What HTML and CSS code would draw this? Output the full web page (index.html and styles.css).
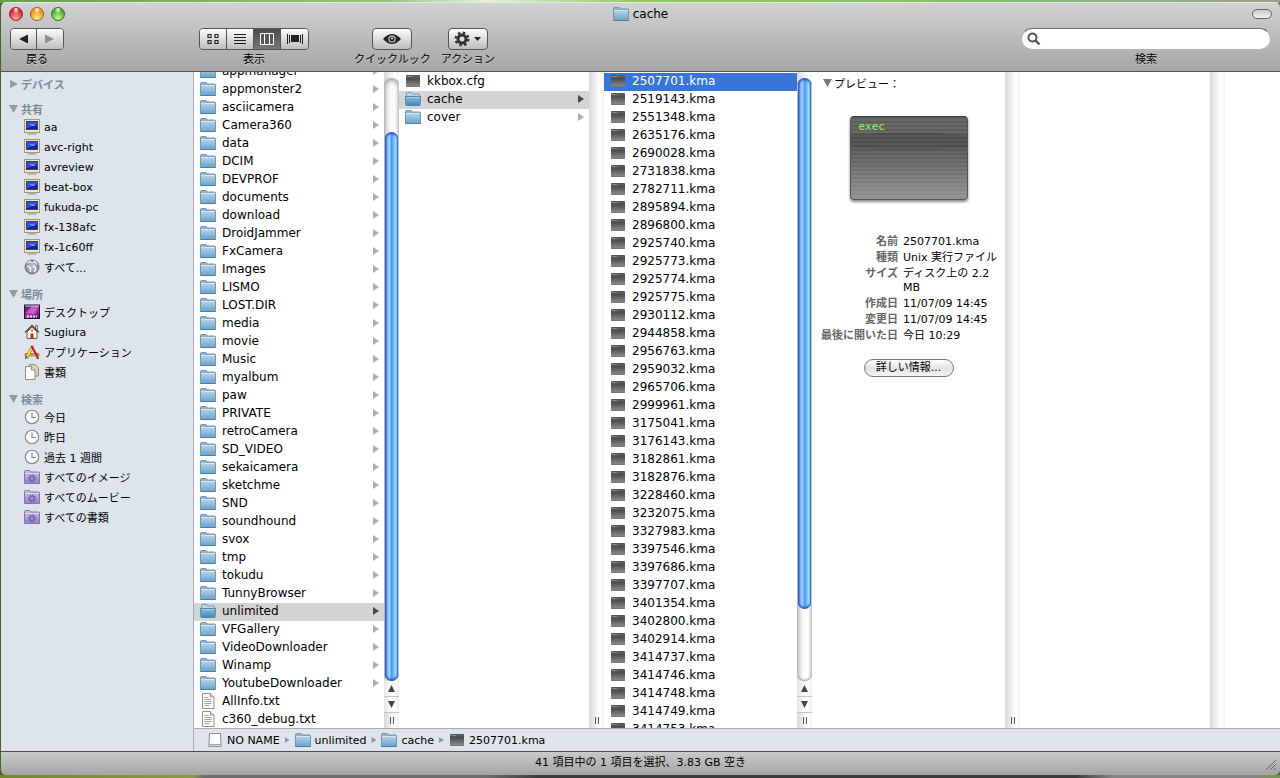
FILE: index.html
```html
<!DOCTYPE html>
<html lang="ja">
<head>
<meta charset="utf-8">
<title>cache</title>
<link rel="stylesheet" href="styles.css">
</head>
<body>
<svg class="defs" aria-hidden="true">
  <defs>
    <linearGradient id="g-folder" x1="0" y1="0" x2="0" y2="1"><stop offset="0" stop-color="#b4d2e8"/><stop offset="1" stop-color="#6fa4c8"/></linearGradient>
    <linearGradient id="g-open" x1="0" y1="0" x2="0" y2="1"><stop offset="0" stop-color="#8fc0dc"/><stop offset="1" stop-color="#4585b0"/></linearGradient>
    <linearGradient id="g-exec" x1="0" y1="0" x2="0" y2="1"><stop offset="0" stop-color="#6a6a6a"/><stop offset=".3" stop-color="#4c4c4c"/><stop offset="1" stop-color="#8f8f8f"/></linearGradient>
    <linearGradient id="g-smart" x1="0" y1="0" x2="0" y2="1"><stop offset="0" stop-color="#c9bfe6"/><stop offset="1" stop-color="#9484c6"/></linearGradient>
    <linearGradient id="g-desk" x1="0" y1="0" x2="1" y2="1"><stop offset="0" stop-color="#2a1050"/><stop offset=".5" stop-color="#b63bb0"/><stop offset="1" stop-color="#3a1668"/></linearGradient>
    <radialGradient id="g-globe"><stop offset="0" stop-color="#f2f2f8"/><stop offset=".6" stop-color="#a4a6bc"/><stop offset="1" stop-color="#77788e"/></radialGradient>
    <symbol id="folder" viewBox="0 0 16 16">
      <path d="M.5 14.500v-12q0-1 1-1h4.300q.7 0 .9.700l.3.800h7.500q1 0 1 1v10.500z" fill="#8db4d0" stroke="#6f97b5"/>
      <path d="M1 4.500h14v9.500H1z" fill="url(#g-folder)"/><path d="M1 4.500h14" stroke="#d3e6f3"/><path d="M.5 14.500h15" stroke="#4d7da3"/>
    </symbol>
    <symbol id="folder-open" viewBox="0 0 16 16">
      <path d="M1.500 13v-10.500q0-1 1-1h4l1 1.500h6q1 0 1 1v9z" fill="#b4d4e8" stroke="#6c9dbe"/>
      <path d="M.5 5.500h15l-.5 9H1z" fill="url(#g-open)" stroke="#4d88b0"/><path d="M1.500 6.500h13" stroke="#a9d2e8"/>
    </symbol>
    <symbol id="exec" viewBox="0 0 16 16">
      <rect x="1" y="2" width="14" height="12" rx="1" fill="url(#g-exec)"/><path d="M1.500 2.500h13" stroke="#555"/><path d="M2 3.500h5" stroke="#6f9c6f"/><path d="M1.500 13.500h13" stroke="#777"/>
    </symbol>
    <symbol id="doc" viewBox="0 0 16 16">
      <path d="M2.500.5h8l3.500 3.500v11.500H2.500z" fill="#fbfbfb" stroke="#929292"/><path d="M10.500.5v3.500H14" fill="#ddd" stroke="#929292"/>
      <path d="M4.500 4.500h4M4.500 6.500h7M4.500 8.500h7M4.500 10.500h7M4.500 12.500h5" stroke="#a2a2a2"/>
    </symbol>
    <symbol id="pc" viewBox="0 0 16 16">
      <rect x=".5" y=".5" width="15" height="13" fill="#efe7bd" stroke="#a09a7c"/><rect x="2.500" y="2.500" width="11" height="8" fill="#141fae" stroke="#3a3d5e"/>
      <path d="M3 3h10v2.500q-4 .5-10 4z" fill="#3450e4"/><path d="M6 5.500h4M7 6.500h4" stroke="#6f88f4"/><path d="M5.500 13.500h5v1h-5z" fill="#b8b18f"/><path d="M3.500 15h9" stroke="#99947a"/>
    </symbol>
    <symbol id="globe" viewBox="0 0 16 16">
      <circle cx="8" cy="8" r="7" fill="url(#g-globe)" stroke="#7b7d92"/><path d="M3 4l3-1.500 2 1.500 3-1.500 2 3M3 7l3 1 1 3-1 2M8 7l3 1 1 3-2 2" fill="none" stroke="#fff" stroke-width="1.200"/><path d="M8 2v12M5 6l5 4" stroke="#7a7c92" stroke-width=".6"/>
    </symbol>
    <symbol id="desktop" viewBox="0 0 16 16">
      <rect x=".5" y="1" width="15" height="13.500" fill="url(#g-desk)" stroke="#1d1030"/><path d="M2 9l6-7h6l-3 8z" fill="#e36ad6" opacity=".7"/><path d="M1 2h14" stroke="#d8c5ea"/><path d="M3 12.500h10" stroke="#dfe6ff" stroke-width="2" stroke-dasharray="2 1"/>
    </symbol>
    <symbol id="home" viewBox="0 0 16 16">
      <path d="M3 8v6.500h10V8L8 3z" fill="#fff8e8" stroke="#6f5a42"/><path d="M11.500 1.500h2v5h-2z" fill="#d8c6aa" stroke="#6f5a42" stroke-width=".7"/><path d="M1 8.500L8 1.500l7 7" fill="none" stroke="#5f4630" stroke-width="1.300"/><path d="M6.500 9.500h3v5h-3z" fill="#b5302a"/><circle cx="8" cy="6.500" r="1" fill="#c33"/>
    </symbol>
    <symbol id="apps" viewBox="0 0 16 16">
      <path d="M1 9.500h14v2.500H1z" fill="#d9a254" stroke="#8f6427" stroke-width=".6"/><path d="M9 2l-6.500 12" stroke="#7d6613" stroke-width="3"/><path d="M9 2L3 13" stroke="#ffe13c" stroke-width="2"/><path d="M7.500 2l5.500 10 1 3" stroke="#c3202b" stroke-width="2.200" fill="none"/><path d="M1.500 15l1-3" stroke="#444"/>
    </symbol>
    <symbol id="papers" viewBox="0 0 16 16">
      <path d="M5.500.5h5.500l3.500 3.500v8H5.500z" fill="#d9d6ae" stroke="#918f6d"/><path d="M1.500 2.500h6l3.500 3.500v9.500H1.500z" fill="#fdfdf8" stroke="#8b8b82"/><path d="M7.500 2.500V6H11" fill="#ddd" stroke="#8b8b82"/>
    </symbol>
    <symbol id="clock" viewBox="0 0 16 16">
      <circle cx="8" cy="8" r="6.700" fill="#fafafa" stroke="#85878a" stroke-width="1.100"/><path d="M8 3.500V8.500h4" fill="none" stroke="#85878a" stroke-width="1.200"/>
    </symbol>
    <symbol id="smart" viewBox="0 0 16 16">
      <path d="M.5 14.500v-12q0-1 1-1h4l1 1.500h8q1 0 1 1v10.500z" fill="url(#g-smart)" stroke="#8474b0"/><path d="M1 4.500h14" stroke="#e1dbf3"/><circle cx="8" cy="9.500" r="2.200" fill="none" stroke="#7767b0" stroke-width="1.500"/><circle cx="8" cy="9.500" r="3.500" fill="none" stroke="#7767b0" stroke-width="1.400" stroke-dasharray="1.370"/>
    </symbol>
    <symbol id="drive" viewBox="0 0 16 16">
      <path d="M2.500 1.500h11l.5 11v2H2v-2z" fill="#fff" stroke="#8d8d8d"/><path d="M2 12.500h12M2 14h12" stroke="#a7a7a7"/>
    </symbol>
  </defs>
</svg>

<div class="window">
  <header class="toolbar">
    <div class="titlebar">
      <div class="lights">
        <button class="light red" aria-label="閉じる"></button>
        <button class="light amber" aria-label="しまう"></button>
        <button class="light green" aria-label="拡大"></button>
      </div>
      <h1 class="title"><svg class="ico"><use href="#folder"/></svg>cache</h1>
      <button class="pill" aria-label="ツールバー"></button>
    </div>
    <div class="tools">
      <div class="tool tool-nav">
        <div class="seg">
          <button class="seg-btn nav-btn" aria-label="前へ"><svg width="10" height="10"><path d="M0 5l9-4.500v9z" fill="#222"/></svg></button>
          <button class="seg-btn nav-btn" aria-label="次へ"><svg width="10" height="10"><path d="M9 5L0 .5v9z" fill="#8f8f8f"/></svg></button>
        </div>
        <span class="tool-label">戻る</span>
      </div>
      <div class="tool tool-view">
        <div class="seg">
          <button class="seg-btn" aria-label="アイコン"><svg width="12" height="12" fill="none" stroke="#222" stroke-width="1.200"><path d="M1 1.500h3v3H1zM8 1.500h3v3H8zM1 7.500h3v3H1zM8 7.500h3v3H8z"/></svg></button>
          <button class="seg-btn" aria-label="リスト"><svg width="12" height="12" stroke="#222"><path d="M0 1.500h12M0 4.500h12M0 7.500h12M0 10.500h12"/></svg></button>
          <button class="seg-btn active" aria-label="カラム"><svg width="14" height="12" fill="#555" stroke="#fff"><path d="M.5.500h13v11H.5zM4.500.5v11M9.500.5v11"/></svg></button>
          <button class="seg-btn" aria-label="Cover Flow"><svg width="16" height="12"><path d="M.5 1v10M2.500 2v8M13.500 2v8M15.500 1v10" stroke="#222"/><path d="M4 2h8v7H4z" fill="#222"/></svg></button>
        </div>
        <span class="tool-label">表示</span>
      </div>
      <div class="tool tool-look">
        <button class="tool-btn" aria-label="クイックルック"><svg width="18" height="12"><path d="M0 6Q9-4 18 6 9 16 0 6z" fill="#222"/><circle cx="9" cy="6" r="3.600" fill="#eee"/><circle cx="9" cy="6" r="2.600" fill="#222"/><circle cx="9" cy="5.500" r="1" fill="#eee"/></svg></button>
        <span class="tool-label">クイックルック</span>
      </div>
      <div class="tool tool-action">
        <button class="tool-btn" aria-label="アクション"><svg width="28" height="16"><circle cx="8" cy="8" r="4" fill="none" stroke="#333" stroke-width="3"/><circle cx="8" cy="8" r="6.300" fill="none" stroke="#333" stroke-width="2.400" stroke-dasharray="2.474"/><path d="M20 6h7l-3.500 4z" fill="#222"/></svg></button>
        <span class="tool-label">アクション</span>
      </div>
      <div class="tool tool-search">
        <div class="search"><svg width="14" height="14"><circle cx="5.500" cy="5.500" r="4" fill="none" stroke="#555" stroke-width="2"/><path d="M8.500 8.500l4 4" stroke="#555" stroke-width="2.400"/></svg><input class="search-input" id="search" type="text"></div>
        <label class="tool-label" for="search">検索</label>
      </div>
    </div>
  </header>

  <main class="body">
    <nav class="sidebar">
      <h2 class="group closed">デバイス</h2>
      <h2 class="group">共有</h2>
      <ul class="places">
        <li><svg class="ico"><use href="#pc"/></svg>aa</li>
        <li><svg class="ico"><use href="#pc"/></svg>avc-right</li>
        <li><svg class="ico"><use href="#pc"/></svg>avreview</li>
        <li><svg class="ico"><use href="#pc"/></svg>beat-box</li>
        <li><svg class="ico"><use href="#pc"/></svg>fukuda-pc</li>
        <li><svg class="ico"><use href="#pc"/></svg>fx-138afc</li>
        <li><svg class="ico"><use href="#pc"/></svg>fx-1c60ff</li>
        <li><svg class="ico"><use href="#globe"/></svg>すべて...</li>
      </ul>
      <h2 class="group">場所</h2>
      <ul class="places">
        <li><svg class="ico"><use href="#desktop"/></svg>デスクトップ</li>
        <li><svg class="ico"><use href="#home"/></svg>Sugiura</li>
        <li><svg class="ico"><use href="#apps"/></svg>アプリケーション</li>
        <li><svg class="ico"><use href="#papers"/></svg>書類</li>
      </ul>
      <h2 class="group">検索</h2>
      <ul class="places">
        <li><svg class="ico"><use href="#clock"/></svg>今日</li>
        <li><svg class="ico"><use href="#clock"/></svg>昨日</li>
        <li><svg class="ico"><use href="#clock"/></svg>過去 1 週間</li>
        <li><svg class="ico"><use href="#smart"/></svg>すべてのイメージ</li>
        <li><svg class="ico"><use href="#smart"/></svg>すべてのムービー</li>
        <li><svg class="ico"><use href="#smart"/></svg>すべての書類</li>
      </ul>
    </nav>

    <div class="browser">
      <div class="columns">
        <section class="col">
          <ul class="files scrolled">
            <li class="dir"><svg class="ico"><use href="#folder"/></svg>appmanager</li>
            <li class="dir"><svg class="ico"><use href="#folder"/></svg>appmonster2</li>
            <li class="dir"><svg class="ico"><use href="#folder"/></svg>asciicamera</li>
            <li class="dir"><svg class="ico"><use href="#folder"/></svg>Camera360</li>
            <li class="dir"><svg class="ico"><use href="#folder"/></svg>data</li>
            <li class="dir"><svg class="ico"><use href="#folder"/></svg>DCIM</li>
            <li class="dir"><svg class="ico"><use href="#folder"/></svg>DEVPROF</li>
            <li class="dir"><svg class="ico"><use href="#folder"/></svg>documents</li>
            <li class="dir"><svg class="ico"><use href="#folder"/></svg>download</li>
            <li class="dir"><svg class="ico"><use href="#folder"/></svg>DroidJammer</li>
            <li class="dir"><svg class="ico"><use href="#folder"/></svg>FxCamera</li>
            <li class="dir"><svg class="ico"><use href="#folder"/></svg>Images</li>
            <li class="dir"><svg class="ico"><use href="#folder"/></svg>LISMO</li>
            <li class="dir"><svg class="ico"><use href="#folder"/></svg>LOST.DIR</li>
            <li class="dir"><svg class="ico"><use href="#folder"/></svg>media</li>
            <li class="dir"><svg class="ico"><use href="#folder"/></svg>movie</li>
            <li class="dir"><svg class="ico"><use href="#folder"/></svg>Music</li>
            <li class="dir"><svg class="ico"><use href="#folder"/></svg>myalbum</li>
            <li class="dir"><svg class="ico"><use href="#folder"/></svg>paw</li>
            <li class="dir"><svg class="ico"><use href="#folder"/></svg>PRIVATE</li>
            <li class="dir"><svg class="ico"><use href="#folder"/></svg>retroCamera</li>
            <li class="dir"><svg class="ico"><use href="#folder"/></svg>SD_VIDEO</li>
            <li class="dir"><svg class="ico"><use href="#folder"/></svg>sekaicamera</li>
            <li class="dir"><svg class="ico"><use href="#folder"/></svg>sketchme</li>
            <li class="dir"><svg class="ico"><use href="#folder"/></svg>SND</li>
            <li class="dir"><svg class="ico"><use href="#folder"/></svg>soundhound</li>
            <li class="dir"><svg class="ico"><use href="#folder"/></svg>svox</li>
            <li class="dir"><svg class="ico"><use href="#folder"/></svg>tmp</li>
            <li class="dir"><svg class="ico"><use href="#folder"/></svg>tokudu</li>
            <li class="dir"><svg class="ico"><use href="#folder"/></svg>TunnyBrowser</li>
            <li class="dir open"><svg class="ico"><use href="#folder-open"/></svg>unlimited</li>
            <li class="dir"><svg class="ico"><use href="#folder"/></svg>VFGallery</li>
            <li class="dir"><svg class="ico"><use href="#folder"/></svg>VideoDownloader</li>
            <li class="dir"><svg class="ico"><use href="#folder"/></svg>Winamp</li>
            <li class="dir"><svg class="ico"><use href="#folder"/></svg>YoutubeDownloader</li>
            <li><svg class="ico"><use href="#doc"/></svg>AllInfo.txt</li>
            <li><svg class="ico"><use href="#doc"/></svg>c360_debug.txt</li>
          </ul>
        </section>
        <div class="scroll">
          <div class="track at-end"><div class="thumb thumb-long"></div></div>
          <button class="arrow up" aria-label="上へ"></button><button class="arrow down" aria-label="下へ"></button>
          <span class="grip"></span>
        </div>
        <section class="col">
          <ul class="files">
            <li><svg class="ico"><use href="#exec"/></svg>kkbox.cfg</li>
            <li class="dir open"><svg class="ico"><use href="#folder-open"/></svg>cache</li>
            <li class="dir"><svg class="ico"><use href="#folder"/></svg>cover</li>
          </ul>
        </section>
        <div class="scroll"><span class="grip"></span></div>
        <section class="col wide">
          <ul class="files">
            <li class="selected"><svg class="ico"><use href="#exec"/></svg>2507701.kma</li>
            <li><svg class="ico"><use href="#exec"/></svg>2519143.kma</li>
            <li><svg class="ico"><use href="#exec"/></svg>2551348.kma</li>
            <li><svg class="ico"><use href="#exec"/></svg>2635176.kma</li>
            <li><svg class="ico"><use href="#exec"/></svg>2690028.kma</li>
            <li><svg class="ico"><use href="#exec"/></svg>2731838.kma</li>
            <li><svg class="ico"><use href="#exec"/></svg>2782711.kma</li>
            <li><svg class="ico"><use href="#exec"/></svg>2895894.kma</li>
            <li><svg class="ico"><use href="#exec"/></svg>2896800.kma</li>
            <li><svg class="ico"><use href="#exec"/></svg>2925740.kma</li>
            <li><svg class="ico"><use href="#exec"/></svg>2925773.kma</li>
            <li><svg class="ico"><use href="#exec"/></svg>2925774.kma</li>
            <li><svg class="ico"><use href="#exec"/></svg>2925775.kma</li>
            <li><svg class="ico"><use href="#exec"/></svg>2930112.kma</li>
            <li><svg class="ico"><use href="#exec"/></svg>2944858.kma</li>
            <li><svg class="ico"><use href="#exec"/></svg>2956763.kma</li>
            <li><svg class="ico"><use href="#exec"/></svg>2959032.kma</li>
            <li><svg class="ico"><use href="#exec"/></svg>2965706.kma</li>
            <li><svg class="ico"><use href="#exec"/></svg>2999961.kma</li>
            <li><svg class="ico"><use href="#exec"/></svg>3175041.kma</li>
            <li><svg class="ico"><use href="#exec"/></svg>3176143.kma</li>
            <li><svg class="ico"><use href="#exec"/></svg>3182861.kma</li>
            <li><svg class="ico"><use href="#exec"/></svg>3182876.kma</li>
            <li><svg class="ico"><use href="#exec"/></svg>3228460.kma</li>
            <li><svg class="ico"><use href="#exec"/></svg>3232075.kma</li>
            <li><svg class="ico"><use href="#exec"/></svg>3327983.kma</li>
            <li><svg class="ico"><use href="#exec"/></svg>3397546.kma</li>
            <li><svg class="ico"><use href="#exec"/></svg>3397686.kma</li>
            <li><svg class="ico"><use href="#exec"/></svg>3397707.kma</li>
            <li><svg class="ico"><use href="#exec"/></svg>3401354.kma</li>
            <li><svg class="ico"><use href="#exec"/></svg>3402800.kma</li>
            <li><svg class="ico"><use href="#exec"/></svg>3402914.kma</li>
            <li><svg class="ico"><use href="#exec"/></svg>3414737.kma</li>
            <li><svg class="ico"><use href="#exec"/></svg>3414746.kma</li>
            <li><svg class="ico"><use href="#exec"/></svg>3414748.kma</li>
            <li><svg class="ico"><use href="#exec"/></svg>3414749.kma</li>
            <li><svg class="ico"><use href="#exec"/></svg>3414753.kma</li>
          </ul>
        </section>
        <div class="scroll">
          <div class="track"><div class="thumb"></div></div>
          <button class="arrow up" aria-label="上へ"></button><button class="arrow down" aria-label="下へ"></button>
          <span class="grip"></span>
        </div>
        <section class="col wide preview">
          <h2 class="preview-title">プレビュー：</h2>
          <div class="exec-art"><span class="exec-text">exec</span></div>
          <dl class="info">
            <dt>名前</dt><dd>2507701.kma</dd>
            <dt>種類</dt><dd>Unix 実行ファイル</dd>
            <dt>サイズ</dt><dd>ディスク上の 2.2 MB</dd>
            <dt>作成日</dt><dd>11/07/09 14:45</dd>
            <dt>変更日</dt><dd>11/07/09 14:45</dd>
            <dt>最後に開いた日</dt><dd>今日 10:29</dd>
          </dl>
          <button class="more">詳しい情報...</button>
        </section>
        <div class="scroll"><span class="grip"></span></div>
        <section class="col"></section>
        <div class="scroll"></div>
      </div>
      <div class="path">
        <span class="crumb"><svg class="ico"><use href="#drive"/></svg>NO NAME</span>
        <span class="crumb"><svg class="ico"><use href="#folder"/></svg>unlimited</span>
        <span class="crumb"><svg class="ico"><use href="#folder"/></svg>cache</span>
        <span class="crumb"><svg class="ico"><use href="#exec"/></svg>2507701.kma</span>
      </div>
    </div>
  </main>
  <footer class="status">41 項目中の 1 項目を選択、3.83 GB 空き
    <svg class="resize" width="12" height="12" stroke="#666"><path d="M1 11L11 1M5 11l6-6M9 11l2-2"/></svg>
  </footer>
</div>
</body>
</html>
```

FILE: styles.css
```css
* { box-sizing: border-box; }
html { height: 100%; }
body {
  margin: 0;
  height: 100%;
  padding: 2px 0 3px 1px;
  overflow: hidden;
  background:
    linear-gradient(90deg, #66a04a, #8cc878 30%, #e4f0d8 38%, #8fc95a 50%, #7cc070 80%, #a09c90) top / 100% 3px no-repeat,
    linear-gradient(90deg, #6f8a28, #8a9a40 15%, #6d6d6d 16%, #6d6d6d 38%, #3c3c3c 42%, #3c3c3c 84%, #858585 87%, #858585 98%, #6f9a4a) bottom / 100% 3px no-repeat,
    #4a6128;
  font-family: "DejaVu Sans", "Noto Sans CJK JP", sans-serif;
  font-size: 12px;
  color: #000;
}
h1, h2, ul, dl, dd { margin: 0; padding: 0; font-weight: normal; list-style: none; }
button { padding: 0; font: inherit; color: inherit; }
.defs { position: absolute; width: 0; height: 0; }
.ico { width: 16px; height: 16px; flex: none; }

.window { height: 100%; display: flex; flex-direction: column; border-radius: 5px; overflow: hidden; }

.toolbar { flex: none; height: 70px; background: linear-gradient(#d2d2d2, #a6a6a6); border-top: 1px solid #e6e6e6; border-bottom: 1px solid #515151; }
.titlebar { display: grid; grid-template-columns: 1fr auto 1fr; align-items: center; height: 21px; padding: 0 8px; }
.lights { display: flex; gap: 7px; }
.light { width: 14px; height: 14px; border-radius: 50%; border: 1px solid #555; }
.red { background: radial-gradient(ellipse at 50% 10%, #fff, transparent 35%), radial-gradient(circle at 50% 85%, #ffa8a8, #e0252f 65%); border-color: #8c1f24; }
.amber { background: radial-gradient(ellipse at 50% 10%, #fff, transparent 35%), radial-gradient(circle at 50% 85%, #ffec8a, #ef9422 65%); border-color: #9c5c1c; }
.green { background: radial-gradient(ellipse at 50% 10%, #fff, transparent 35%), radial-gradient(circle at 50% 85%, #c8f79a, #4fae33 65%); border-color: #33701f; }
.title { display: flex; align-items: center; gap: 4px; font-size: 12px; line-height: 18px; }
.pill { justify-self: end; width: 20px; height: 10px; border: 1px solid #666; border-radius: 5px; background: linear-gradient(#c8c8c8, #f2f2f2); }

.tools { display: flex; align-items: flex-start; padding: 4px 9px 0; }
.tool { display: flex; flex-direction: column; align-items: center; }
.tool-nav { align-items: stretch; text-align: center; }
.tool-view { margin-left: 135px; }
.tool-look { margin-left: 45px; }
.tool-action { margin-left: 10px; }
.tool-search { margin-left: auto; width: 250px; }
.tool-label { font-size: 11px; line-height: 16px; margin-top: 2px; text-shadow: 0 1px 0 #ccc; white-space: nowrap; }
.seg { display: flex; height: 22px; border: 1px solid #555; border-radius: 4px; overflow: hidden; }
.seg-btn { width: 27px; display: flex; align-items: center; justify-content: center; border: 0; border-right: 1px solid #555; background: linear-gradient(#fdfdfd, #bdbdbd); }
.seg-btn:last-child { border-right: 0; }
.nav-btn { width: 26px; }
.seg-btn.active { background: linear-gradient(#4a4a4a, #777); }
.tool-btn { width: 40px; height: 22px; display: flex; align-items: center; justify-content: center; border: 1px solid #555; border-radius: 4px; background: linear-gradient(#fdfdfd, #bdbdbd); }
.search { display: flex; align-items: center; width: 100%; height: 22px; padding: 0 5px; border-radius: 11px; background: #fff; border: 1px solid #b5b5b5; border-top-color: #707070; }
.search-input { flex: 1; min-width: 0; border: 0; outline: 0; background: none; font: inherit; }

.body { flex: 1; min-height: 0; display: flex; background: #fff; }
.sidebar { flex: none; width: 193px; padding-top: 2px; background: #dde4eb; border-right: 1px solid #a9adb3; overflow: hidden; font-size: 11px; }
.group { display: flex; align-items: center; gap: 3px; height: 20px; padding-left: 8px; font-size: 11px; font-weight: bold; color: #7d8a9a; }
.group::before { content: ""; width: 9px; height: 8px; background: #919ba6; clip-path: polygon(0 0, 100% 0, 50% 100%); }
.closed { margin-bottom: 5px; }
.closed::before { clip-path: polygon(12% 0, 100% 50%, 12% 100%); }
.places { margin-bottom: 5px; }
.places li { display: flex; align-items: center; gap: 4px; height: 20px; padding: 0 0 4px 23px; white-space: nowrap; }

.browser { flex: 1; min-width: 0; display: flex; flex-direction: column; }
.columns { flex: 1; min-height: 0; display: flex; overflow: hidden; }
.col { flex: none; width: 190px; overflow: hidden; }
.wide { width: 193px; }
.files { padding-top: 1px; }
.scrolled { margin-top: -10px; }
.files li { display: flex; align-items: center; gap: 6px; height: 18px; padding: 0 0 2px 6px; line-height: 16px; white-space: nowrap; }
.dir::after { content: ""; width: 6px; height: 8px; margin: 0 5px 0 auto; background: #b0b0b0; clip-path: polygon(0 0, 100% 50%, 0 100%); }
.open { background: #d4d4d4; }
.open::after { background: #4a4a4a; }
.selected { background: #3875d7; color: #fff; }

.scroll { flex: none; width: 15px; display: flex; flex-direction: column; align-items: center; background: linear-gradient(90deg, #d9d9d9, #f8f8f8 60%, #fff 70%, #f5f5f5); }
.track { flex: 1; display: flex; flex-direction: column; align-items: center; width: 15px; margin-top: 6px; border-radius: 7px; background: linear-gradient(90deg, #cfcfcf, #f8f8f8 40%, #fff 70%, #e6e6e6); box-shadow: inset 0 3px 4px #aaa, inset 0 -1px 2px #999; }
.at-end { justify-content: flex-end; }
.thumb { width: 13px; height: 88%; border-radius: 7px; background: linear-gradient(90deg, #1d49c9, #7ab4f4 18%, #a3d0fa 35%, #4a9af0 50%, #6cc0ff 68%, #a0ecff 85%, #3c6fb8); box-shadow: inset 0 2px 2px #2d58c8, inset 0 -2px 2px #2d58c8; }
.thumb-long { height: 91%; }
.arrow { flex: none; width: 15px; height: 16px; display: flex; align-items: center; justify-content: center; border: 0; border-bottom: 1px solid #c4c4c4; background: linear-gradient(90deg, #e6e6e6, #fff 60%, #f0f0f0); }
.arrow::before { content: ""; width: 7px; height: 7px; background: #444; clip-path: polygon(50% 0, 100% 100%, 0 100%); }
.down::before { clip-path: polygon(0 0, 100% 0, 50% 100%); }
.grip { flex: none; width: 4px; height: 7px; margin: auto 0 4px; border: solid #555; border-width: 0 1px; }
.track ~ .grip { margin-top: 4px; }

.preview { display: flex; flex-direction: column; align-items: center; }
.preview-title { align-self: stretch; display: flex; align-items: center; height: 22px; padding-left: 11px; font-size: 11px; }
.preview-title::before { content: ""; width: 9px; height: 8px; margin-right: 2px; background: #777; clip-path: polygon(0 0, 100% 0, 50% 100%); }
.exec-art { width: 118px; height: 84px; margin-top: 22px; padding: 2px 8px; border: 1px solid #555; border-top-color: #383838; border-radius: 4px; background: repeating-linear-gradient(#0000 0 2px, #ffffff10 2px 4px), radial-gradient(ellipse 110px 8px at 50% 24px, #4e4e4e 98%, transparent), linear-gradient(#5e5e5e 0 24px, #4e4e4e 24px, #929292); box-shadow: 0 2px 3px #888; }
.exec-text { display: block; font: 11px/16px "DejaVu Sans Mono", monospace; color: #86f95f; }
.info { align-self: stretch; display: grid; grid-template-columns: 86px 1fr; column-gap: 5px; row-gap: 2px; margin-top: 35px; padding-right: 6px; font-size: 11px; line-height: 14px; }
.info dt { text-align: right; font-weight: bold; color: #666; white-space: nowrap; }
.more { width: 90px; height: 18px; margin-top: 16px; border: 1px solid #777; border-radius: 9px; background: linear-gradient(#fff, #e2e2e2 50%, #f4f4f4); font-size: 11px; line-height: 14px; }

.path { flex: none; height: 23px; display: flex; align-items: center; padding-left: 13px; border-top: 1px solid #aaa; background: #dde4eb; font-size: 11px; }
.crumb { display: flex; align-items: center; gap: 4px; }
.crumb:not(:last-child)::after { content: ""; width: 5px; height: 6px; margin: 0 5px 0 1px; background: #8f979f; clip-path: polygon(0 0, 100% 50%, 0 100%); }
.status { position: relative; flex: none; height: 24px; border-top: 1px solid #515151; background: linear-gradient(#cacaca, #a4a4a4); text-align: center; font-size: 11px; line-height: 22px; }
.resize { position: absolute; right: 3px; bottom: 4px; }
```
